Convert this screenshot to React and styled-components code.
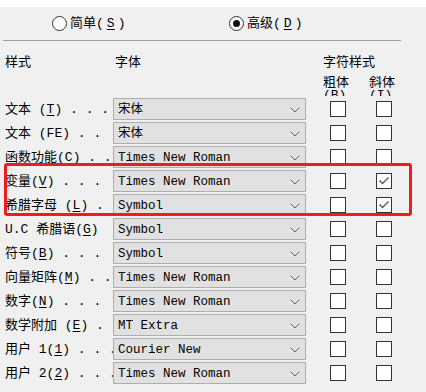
import React from 'react';
import styled, { createGlobalStyle } from 'styled-components';

const Global = createGlobalStyle`
  body {
    margin: 0;
    background: #f0f0f0;
  }
`;

const Window = styled.div`
  position: relative;
  width: 426px;
  height: 392px;
  overflow: hidden;
  background: #f0f0f0;
  color: #000;
  font-family: "Liberation Mono", "Noto Sans CJK SC", monospace;
  font-size: 13px;
  line-height: 16px;
`;

const TopBand = styled.div`
  height: 7px;
  background: #fff;
`;

const ModeBar = styled.div`
  height: 33px;
  display: grid;
  grid-template-columns: 177px auto;
  align-items: center;
  padding-left: 52px;
`;

const Radio = styled.label`
  display: flex;
  align-items: center;
  gap: 3px;
  white-space: pre;
`;

const RadioCircle = styled.span`
  width: 15px;
  height: 15px;
  box-sizing: border-box;
  border-radius: 50%;
  border: 1px solid #333;
  background: #fff;
  display: flex;
  align-items: center;
  justify-content: center;

  &::after {
    content: '';
    width: 7px;
    height: 7px;
    border-radius: 50%;
    background: ${p => (p.$checked ? '#111' : 'transparent')};
  }
`;

const Key = styled.span`
  text-decoration: underline;
  text-underline-offset: 2px;
`;

const Divider = styled.div`
  width: 398px;
  margin-left: 3px;
  border-top: 1px solid #a0a0a0;
`;

const Header = styled.div`
  height: 57px;
  box-sizing: border-box;
  padding: 14px 0 0 5px;
  display: grid;
  grid-template-columns: 110px 208px auto;
  align-items: start;
`;

const StyleGroup = styled.div`
  display: flex;
  flex-direction: column;
`;

const StyleLabels = styled.div`
  display: flex;
  gap: 20px;
  margin-top: 5px;
`;

const StyleLabel = styled.div`
  width: 26px;
  height: 20px;
  line-height: 13px;
  overflow: hidden;
`;

const Rows = styled.div`
  display: flex;
  flex-direction: column;
  gap: 2px;
  padding-left: 5px;
`;

const Row = styled.div`
  height: 22px;
  display: grid;
  grid-template-columns: 108px 193px 24px 16px 30px 16px;
  align-items: center;
`;

const Label = styled.div`
  white-space: pre;
  padding-top: 2px;
`;

const Combo = styled.div`
  grid-column: 2;
  height: 22px;
  box-sizing: border-box;
  border: 1px solid #adadad;
  background: #e1e1e1;
  display: flex;
  align-items: center;
  justify-content: space-between;
  padding: 1px 5px 0 4px;
  font-size: 12.5px;
`;

const Chevron = () => (
  <svg width="10" height="6" viewBox="0 0 10 6">
    <polyline points="0.5,0.5 5,5 9.5,0.5" fill="none" stroke="#606060" strokeWidth="1" />
  </svg>
);

const Box = styled.span`
  grid-column: ${p => p.$col};
  width: 16px;
  height: 16px;
  box-sizing: border-box;
  border: 1px solid #333;
  background: #fff;
  display: flex;
  align-items: center;
  justify-content: center;
`;

const Check = () => (
  <svg width="12" height="10" viewBox="0 0 12 10">
    <polyline points="1.5,4.5 4.5,7.5 10.5,1.5" fill="none" stroke="#555" strokeWidth="1.3" />
  </svg>
);

const Highlight = styled.div`
  position: absolute;
  left: 4px;
  top: 163px;
  width: 408px;
  height: 53px;
  box-sizing: border-box;
  border: 3.5px solid #ee1c1c;
  border-radius: 3px;
  pointer-events: none;
`;

const rows = [
  ['文本 (', 'T', ') . . .', '宋体', false],
  ['文本 (FE) . .', null, '', '宋体', false],
  ['函数功能(', 'C', ') . .', 'Times New Roman', false],
  ['变量(', 'V', ') . . .', 'Times New Roman', true],
  ['希腊字母 (', 'L', ') .', 'Symbol', true],
  ['U.C 希腊语(', 'G', ')', 'Symbol', false],
  ['符号(', 'B', ') . . .', 'Symbol', false],
  ['向量矩阵(', 'M', ') . .', 'Times New Roman', false],
  ['数字(', 'N', ') . . .', 'Times New Roman', false],
  ['数学附加 (', 'E', ') .', 'MT Extra', false],
  ['用户 1(', '1', ') . . .', 'Courier New', false],
  ['用户 2(', '2', ') . . .', 'Times New Roman', false],
];

export default function App() {
  return (
    <Window>
      <Global />
      <TopBand />
      <ModeBar>
        <Radio><RadioCircle />简单(<Key>S</Key>)</Radio>
        <Radio><RadioCircle $checked />高级(<Key>D</Key>)</Radio>
      </ModeBar>
      <Divider />
      <Header>
        <div>样式</div>
        <div>字体</div>
        <StyleGroup>
          <div>字符样式</div>
          <StyleLabels>
            <StyleLabel>粗体(B)</StyleLabel>
            <StyleLabel>斜体(I)</StyleLabel>
          </StyleLabels>
        </StyleGroup>
      </Header>
      <Rows>
        {rows.map(([before, key, after, font, italic], i) => (
          <Row key={i}>
            <Label>
              {before}
              {key && <Key>{key}</Key>}
              {after}
            </Label>
            <Combo>
              <span>{font}</span>
              <Chevron />
            </Combo>
            <Box $col={4} />
            <Box $col={6}>{italic && <Check />}</Box>
          </Row>
        ))}
      </Rows>
      <Highlight />
    </Window>
  );
}
